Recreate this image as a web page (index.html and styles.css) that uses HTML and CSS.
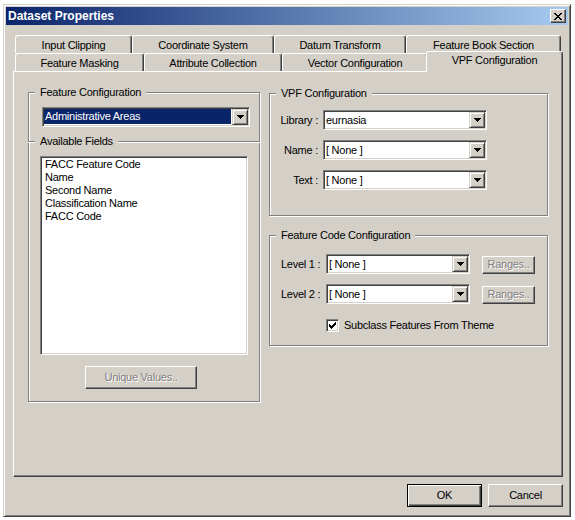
FILE: index.html
```html
<!DOCTYPE html>
<html>
<head>
    <meta charset="UTF-8">
    <title>Dataset Properties</title>
    <link rel="stylesheet" href="styles.css">
</head>
<body>
<div class="window">
    <div class="titlebar">
        <span class="caption">Dataset Properties</span>
        <span class="raised close">
            <svg width="8" height="7" viewBox="0 0 8 7" shape-rendering="crispEdges"><path d="M0 0h2v1h-2z M6 0h2v1h-2z M1 1h2v1h-2z M5 1h2v1h-2z M2 2h4v1h-4z M3 3h2v1h-2z M2 4h4v1h-4z M1 5h2v1h-2z M5 5h2v1h-2z M0 6h2v1h-2z M6 6h2v1h-2z"/></svg>
        </span>
    </div>

    <div class="client">
        <div class="tabs">
            <div class="tab-row">
                <div class="tab tab-clip">Input Clipping</div>
                <div class="tab tab-coord">Coordinate System</div>
                <div class="tab tab-datum">Datum Transform</div>
                <div class="tab tab-book">Feature Book Section</div>
            </div>
            <div class="tab-row">
                <div class="tab tab-mask">Feature Masking</div>
                <div class="tab tab-attr">Attribute Collection</div>
                <div class="tab tab-vector">Vector Configuration</div>
                <div class="tab tab-vpf current">VPF Configuration</div>
            </div>
        </div>

        <div class="panel">
            <!-- left column: feature class + its fields -->
            <div class="group group-fields">
                <span class="group-title">Feature Configuration</span>
                <div class="combo combo-feature">
                    <span class="combo-text selected">Administrative Areas</span>
                    <span class="drop"><svg width="7" height="4" viewBox="0 0 7 4" shape-rendering="crispEdges"><path d="M0 0h7v1h-1v1h-1v1h-1v1h-1v-1h-1v-1h-1v-1h-1z"/></svg></span>
                </div>
                <div class="group-sep"></div>
                <span class="group-title sep-title">Available Fields</span>
                <div class="listbox">
                    <div>FACC Feature Code</div>
                    <div>Name</div>
                    <div>Second Name</div>
                    <div>Classification Name</div>
                    <div>FACC Code</div>
                </div>
                <div class="raised push disabled unique">Unique Values..</div>
            </div>

            <div class="right-col">
                <div class="group group-vpf">
                    <span class="group-title">VPF Configuration</span>
                    <div class="field-grid">
                        <span class="field-label">Library :</span>
                        <div class="combo">
                            <span class="combo-text">eurnasia</span>
                            <span class="drop"><svg width="7" height="4" viewBox="0 0 7 4" shape-rendering="crispEdges"><path d="M0 0h7v1h-1v1h-1v1h-1v1h-1v-1h-1v-1h-1v-1h-1z"/></svg></span>
                        </div>
                        <span class="field-label">Name :</span>
                        <div class="combo">
                            <span class="combo-text">[ None ]</span>
                            <span class="drop"><svg width="7" height="4" viewBox="0 0 7 4" shape-rendering="crispEdges"><path d="M0 0h7v1h-1v1h-1v1h-1v1h-1v-1h-1v-1h-1v-1h-1z"/></svg></span>
                        </div>
                        <span class="field-label">Text :</span>
                        <div class="combo">
                            <span class="combo-text">[ None ]</span>
                            <span class="drop"><svg width="7" height="4" viewBox="0 0 7 4" shape-rendering="crispEdges"><path d="M0 0h7v1h-1v1h-1v1h-1v1h-1v-1h-1v-1h-1v-1h-1z"/></svg></span>
                        </div>
                    </div>
                </div>

                <div class="group group-code">
                    <span class="group-title">Feature Code Configuration</span>
                    <div class="level-grid">
                        <span>Level 1 :</span>
                        <div class="combo">
                            <span class="combo-text">[ None ]</span>
                            <span class="drop"><svg width="7" height="4" viewBox="0 0 7 4" shape-rendering="crispEdges"><path d="M0 0h7v1h-1v1h-1v1h-1v1h-1v-1h-1v-1h-1v-1h-1z"/></svg></span>
                        </div>
                        <div class="raised push disabled ranges">Ranges..</div>
                        <span>Level 2 :</span>
                        <div class="combo">
                            <span class="combo-text">[ None ]</span>
                            <span class="drop"><svg width="7" height="4" viewBox="0 0 7 4" shape-rendering="crispEdges"><path d="M0 0h7v1h-1v1h-1v1h-1v1h-1v-1h-1v-1h-1v-1h-1z"/></svg></span>
                        </div>
                        <div class="raised push disabled ranges">Ranges..</div>
                    </div>
                    <div class="check-row">
                        <span class="checkbox">
                            <svg width="7" height="7" viewBox="0 0 7 7" shape-rendering="crispEdges"><path d="M6 0h1v1h-1z M5 1h2v1h-2z M0 2h1v1h-1z M4 2h3v1h-3z M0 3h2v1h-2z M3 3h3v1h-3z M0 4h5v1h-5z M1 5h3v1h-3z M2 6h1v1h-1z"/></svg>
                        </span>
                        <span>Subclass Features From Theme</span>
                    </div>
                </div>
            </div>
        </div>

        <div class="footer">
            <div class="raised push default">OK</div>
            <div class="raised push">Cancel</div>
        </div>
    </div>
</div>
</body>
</html>
```

FILE: styles.css
```css
body {
    margin: 0;
    background: #fff;
    font-family: "Liberation Sans", Arial, sans-serif;
    font-size: 11px;
    line-height: 13px;
    letter-spacing: -0.25px;
    color: #000;
}

/* dialog frame */
.window {
    box-sizing: border-box;
    width: 568px;
    height: 513px;
    margin: 4px 0 0 3px;
    padding: 2px;
    background: #d4d0c8;
    border: 1px solid;
    border-color: #d4d0c8 #404040 #404040 #d4d0c8;
    box-shadow: inset 1px 1px #fff, inset -1px -1px #808080;
    display: flex;
    flex-direction: column;
}

.titlebar {
    height: 18px;
    display: flex;
    align-items: center;
    justify-content: space-between;
    padding: 0 2px;
    background: linear-gradient(to right, #0a246a, #a6caf0);
    color: #fff;
}

.caption {
    font-weight: bold;
    font-size: 12px;
    letter-spacing: 0;
}

/* 3d raised look shared by buttons */
.raised {
    box-sizing: border-box;
    background: #d4d0c8;
    border: 1px solid;
    border-color: #fff #404040 #404040 #fff;
    box-shadow: inset -1px -1px #808080;
}

.close {
    width: 16px;
    height: 14px;
    display: flex;
    align-items: center;
    justify-content: center;
}

.client {
    flex: 1;
    display: flex;
    flex-direction: column;
    padding: 10px 5px 0 7px;
}

/* tab strip, two rows */
.tabs {
    margin-left: 2px;
    width: 546px;
}

.tab-row {
    display: flex;
    height: 18px;
}

.tab {
    box-sizing: border-box;
    height: 18px;
    padding-top: 3px;
    text-align: center;
    white-space: nowrap;
    background: #d4d0c8;
    border: 1px solid;
    border-bottom: 0;
    border-color: #fff #404040 #404040 #fff;
    border-radius: 3px 3px 0 0;
    box-shadow: inset -1px 0 #808080;
}

.tab-clip { width: 117px; }
.tab-coord { width: 142px; }
.tab-datum { width: 132px; }
.tab-book { width: 155px; }
.tab-mask { width: 129px; }
.tab-attr { width: 138px; }
.tab-vector { width: 146px; }
.tab-vpf { width: 133px; }

.tab.current {
    position: relative;
    z-index: 1;
    width: 137px;
    height: 21px;
    margin: -2px -2px -1px;
    padding-top: 2px;
}

.panel {
    box-sizing: border-box;
    height: 406px;
    padding: 20px 14px 0;
    border: 1px solid;
    border-color: #fff #404040 #404040 #fff;
    box-shadow: inset -1px -1px #808080;
    display: grid;
    grid-template-columns: 232px 279px;
    column-gap: 9px;
    align-items: start;
}

/* etched group boxes */
.group {
    box-sizing: border-box;
    border: 1px solid #808080;
    box-shadow: 1px 1px #fff, inset 1px 1px #fff;
    display: flex;
    flex-direction: column;
    align-items: flex-start;
}

.group-title {
    margin: -7px 0 0 6px;
    padding: 0 5px;
    background: #d4d0c8;
}

.group-sep {
    align-self: stretch;
    margin: 14px -1px 0;
    border-top: 1px solid #808080;
    border-bottom: 1px solid #fff;
}

.group-title.sep-title {
    margin-top: -8px;
}

.group-fields {
    height: 310px;
}

.right-col {
    margin-top: 1px;
    display: flex;
    flex-direction: column;
    gap: 19px;
}

.group-vpf {
    height: 123px;
}

.group-code {
    height: 111px;
}

/* sunken controls */
.combo,
.listbox,
.checkbox {
    box-sizing: border-box;
    background: #fff;
    border: 1px solid;
    border-color: #808080 #fff #fff #808080;
    box-shadow: inset 1px 1px #404040, inset -1px -1px #d4d0c8;
}

.combo {
    height: 20px;
    padding: 1px;
    display: flex;
}

.combo-text {
    flex: 1;
    line-height: 16px;
    padding-left: 1px;
    white-space: nowrap;
}

.combo-text.selected {
    margin: 0 1px 1px 0;
    line-height: 15px;
    background: #0a246a;
    color: #fff;
}

.drop {
    box-sizing: border-box;
    width: 16px;
    height: 16px;
    display: flex;
    align-items: center;
    justify-content: center;
    background: #d4d0c8;
    border: 1px solid;
    border-color: #d4d0c8 #404040 #404040 #d4d0c8;
    box-shadow: inset 1px 1px #fff, inset -1px -1px #808080;
}

.combo-feature {
    width: 208px;
    margin: 8px 0 0 13px;
}

.listbox {
    width: 208px;
    height: 199px;
    margin: 8px 0 0 11px;
    padding: 1px 4px;
}

.push {
    display: flex;
    align-items: center;
    justify-content: center;
    width: 75px;
    height: 23px;
    padding-bottom: 1px;
}

.push.disabled {
    color: #808080;
    text-shadow: 1px 1px #fff;
}

.unique {
    width: 112px;
    margin: 11px 0 0 56px;
}

.field-grid {
    margin-top: 10px;
    display: grid;
    grid-template-columns: 48px 164px;
    column-gap: 5px;
    row-gap: 10px;
    align-items: center;
}

.field-label {
    text-align: right;
}

.level-grid {
    margin: 12px 0 0 11px;
    display: grid;
    grid-template-columns: 45px 144px 65px;
    row-gap: 10px;
    align-items: center;
}

.ranges {
    width: 53px;
    height: 18px;
    margin-left: 12px;
    align-self: end;
}

.check-row {
    margin: 15px 0 0 56px;
    display: flex;
    align-items: center;
    gap: 5px;
}

.checkbox {
    width: 13px;
    height: 13px;
    display: flex;
    align-items: center;
    justify-content: center;
}

.footer {
    margin-top: 7px;
    display: flex;
    justify-content: flex-end;
    gap: 6px;
}

.push.default {
    border: 1px solid #000;
    box-shadow: inset 1px 1px #fff, inset -1px -1px #404040, inset -2px -2px #808080;
}
```
